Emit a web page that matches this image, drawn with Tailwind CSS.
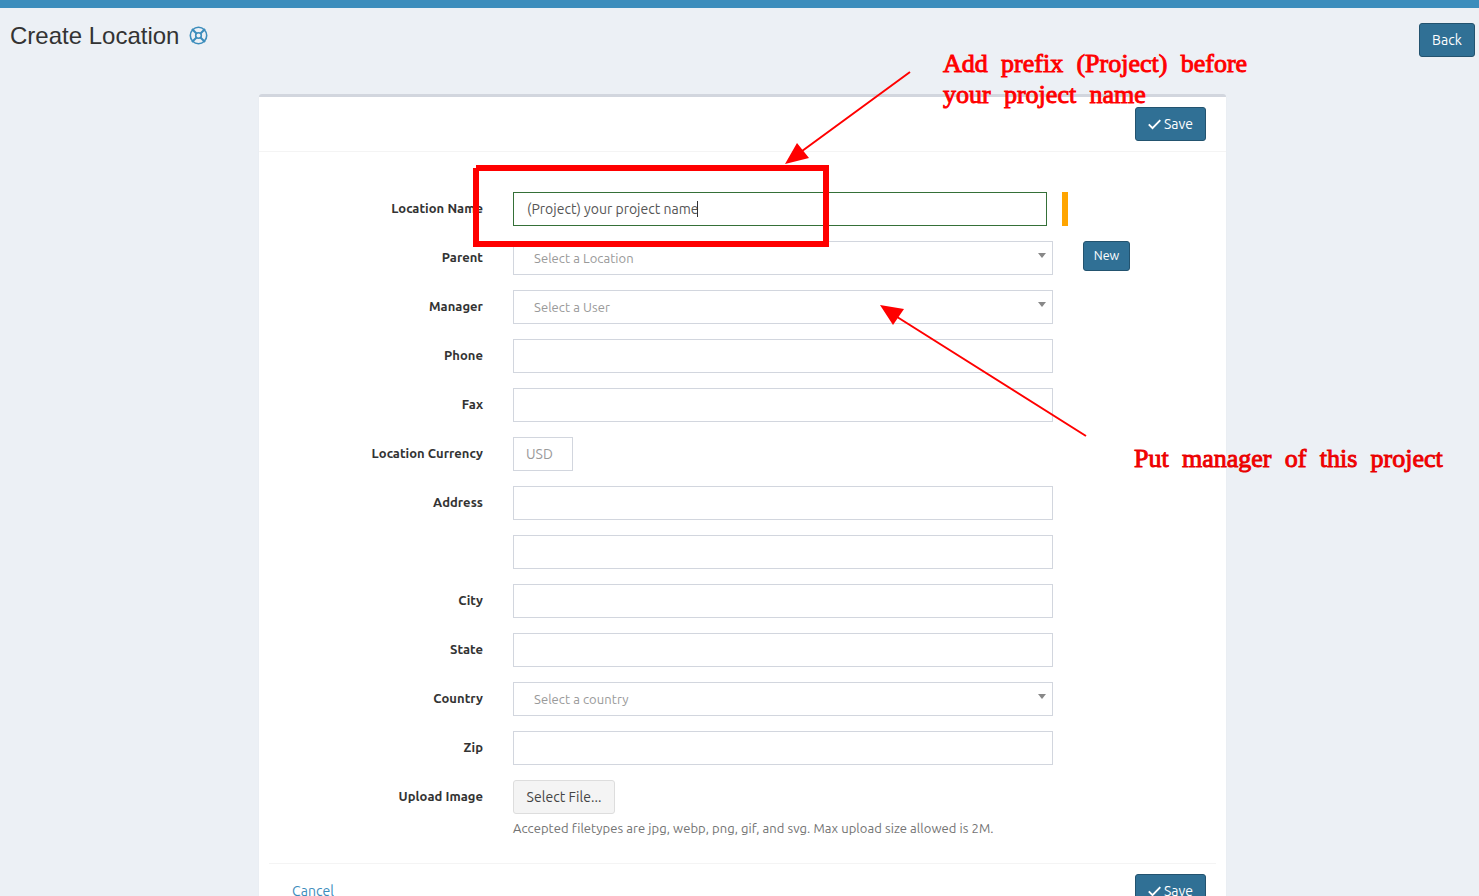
<!DOCTYPE html>
<html lang="en">
<head>
<meta charset="utf-8">
<title>Create Location</title>
<script src="https://cdn.jsdelivr.net/npm/@tailwindcss/browser@4"></script>
</head>
<body class="relative h-[896px] overflow-hidden bg-[#ecf0f5] font-['Ubuntu','Noto_Sans',sans-serif] text-sm text-[#333]">
<div class="h-2 bg-[#3c8dbc]"></div>
<header class="flex h-[86px] items-start justify-between pl-[10px] pr-1">
  <h1 class="mt-[10px] flex items-center font-['Liberation_Sans',sans-serif] text-2xl leading-9">Create Location
    <svg class="mb-0.5 ml-[10px] size-[19px]" viewBox="0 0 19 19" fill="none" stroke="#3c8dbc" stroke-width="1.6"><circle cx="9.5" cy="9.5" r="8.2"/><circle cx="9.5" cy="9.5" r="2.8"/><path d="M3 3l4.5 4.5M16 3l-4.5 4.5M3 16l4.5-4.5M16 16l-4.5-4.5" stroke-width="2.1"/></svg>
  </h1>
  <button class="mt-[15px] h-[34px] w-14 rounded-[3px] border border-[#23536f] bg-[#307095] text-white"><span class="tracking-[0.1px]">Back</span></button>
</header>
<main class="ml-[259px] h-[820px] w-[967px] rounded-t-[3px] border-t-[3px] border-[#d2d6de] bg-white shadow-[0_1px_1px_rgba(0,0,0,0.1)]">
  <div class="flex h-[55px] justify-end border-b border-[#f4f4f4] pr-5 pt-[10px]">
    <button class="flex h-[34px] w-[71px] items-center justify-center gap-[3px] rounded-[3px] border border-[#23536f] bg-[#307095] text-white"><svg class="size-[13px]" viewBox="0 0 13 13" fill="none" stroke="#fff" stroke-width="1.9"><path d="M.8 6.3l3.7 3.8L12.3 2.2"/></svg><span>Save</span></button>
  </div>
  <form class="flex flex-col gap-[15px] pt-10">
    <div class="flex h-[34px]"><label class="mr-[30px] w-[224px] pt-[6px] text-right text-[13px] leading-5 font-bold whitespace-nowrap tracking-[0.04px]">Location Name</label><div class="flex h-[34px] w-[534px] items-center border border-[#357038] pl-[13px] text-[#555]"><span>(Project) your project name</span><span class="-ml-px h-4 w-px bg-[#333]"></span></div><div class="ml-[15px] w-1.5 bg-[#ffa500]"></div></div>
    <div class="flex h-[34px]"><label class="mr-[30px] w-[224px] pt-[6px] text-right text-[13px] leading-5 font-bold tracking-[0.04px]">Parent</label><div class="flex w-[540px] justify-between border border-[#d2d6de] pl-5 pr-1.5 text-[13px] leading-[33px] text-[#999]"><span class="tracking-[0.07px]">Select a Location</span><svg class="mt-[11px] h-[5px] w-2" viewBox="0 0 8 5"><path d="M0 0h8L4 5z" fill="#888"/></svg></div><button type="button" class="ml-[30px] h-[30px] w-[47px] rounded-[3px] border border-[#23536f] bg-[#307095] text-[12.5px] text-white">New</button></div>
    <div class="flex h-[34px]"><label class="mr-[30px] w-[224px] pt-[6px] text-right text-[13px] leading-5 font-bold tracking-[0.04px]">Manager</label><div class="flex w-[540px] justify-between border border-[#d2d6de] pl-5 pr-1.5 text-[13px] leading-[33px] text-[#999]"><span class="tracking-[0.07px]">Select a User</span><svg class="mt-[11px] h-[5px] w-2" viewBox="0 0 8 5"><path d="M0 0h8L4 5z" fill="#888"/></svg></div></div>
    <div class="flex h-[34px]"><label class="mr-[30px] w-[224px] pt-[6px] text-right text-[13px] leading-5 font-bold tracking-[0.04px]">Phone</label><div class="w-[540px] border border-[#d2d6de]"></div></div>
    <div class="flex h-[34px]"><label class="mr-[30px] w-[224px] pt-[6px] text-right text-[13px] leading-5 font-bold tracking-[0.04px]">Fax</label><div class="w-[540px] border border-[#d2d6de]"></div></div>
    <div class="flex h-[34px]"><label class="mr-[30px] w-[224px] pt-[6px] text-right text-[13px] leading-5 font-bold tracking-[0.04px]">Location Currency</label><div class="w-[60px] border border-[#d2d6de] pl-3 leading-[33px] text-[#999]"><span>USD</span></div></div>
    <div class="flex h-[34px]"><label class="mr-[30px] w-[224px] pt-[6px] text-right text-[13px] leading-5 font-bold tracking-[0.04px]">Address</label><div class="w-[540px] border border-[#d2d6de]"></div></div>
    <div class="flex h-[34px] pl-[254px]"><div class="w-[540px] border border-[#d2d6de]"></div></div>
    <div class="flex h-[34px]"><label class="mr-[30px] w-[224px] pt-[6px] text-right text-[13px] leading-5 font-bold tracking-[0.04px]">City</label><div class="w-[540px] border border-[#d2d6de]"></div></div>
    <div class="flex h-[34px]"><label class="mr-[30px] w-[224px] pt-[6px] text-right text-[13px] leading-5 font-bold tracking-[0.04px]">State</label><div class="w-[540px] border border-[#d2d6de]"></div></div>
    <div class="flex h-[34px]"><label class="mr-[30px] w-[224px] pt-[6px] text-right text-[13px] leading-5 font-bold tracking-[0.04px]">Country</label><div class="flex w-[540px] justify-between border border-[#d2d6de] pl-5 pr-1.5 text-[13px] leading-[33px] text-[#999]"><span class="tracking-[0.07px]">Select a country</span><svg class="mt-[11px] h-[5px] w-2" viewBox="0 0 8 5"><path d="M0 0h8L4 5z" fill="#888"/></svg></div></div>
    <div class="flex h-[34px]"><label class="mr-[30px] w-[224px] pt-[6px] text-right text-[13px] leading-5 font-bold tracking-[0.04px]">Zip</label><div class="w-[540px] border border-[#d2d6de]"></div></div>
    <div class="flex h-[68px]"><label class="mr-[30px] w-[224px] pt-[6px] text-right text-[13px] leading-5 font-bold tracking-[0.04px]">Upload Image</label><div><button type="button" class="h-[34px] w-[102px] rounded-[3px] border border-[#ddd] bg-[#f4f4f4] text-[#444]"><span class="tracking-[0.05px]">Select File...</span></button><p class="mt-1 text-[13px] leading-5 whitespace-nowrap text-[#737373]"><span class="tracking-[0.065px]">Accepted filetypes are jpg, webp, png, gif, and svg. Max upload size allowed is 2M.</span></p></div></div>
  </form>
  <footer class="mx-[10px] mt-[15px] flex justify-between border-t border-[#f4f4f4] pt-[10px] pl-[23px] pr-[10px]">
    <a class="pt-[7px] leading-5 text-[#3c8dbc]"><span class="tracking-[0.05px]">Cancel</span></a>
    <button class="flex h-[34px] w-[71px] items-center justify-center gap-[3px] rounded-[3px] border border-[#23536f] bg-[#307095] text-white"><svg class="size-[13px]" viewBox="0 0 13 13" fill="none" stroke="#fff" stroke-width="1.9"><path d="M.8 6.3l3.7 3.8L12.3 2.2"/></svg><span>Save</span></button>
  </footer>
</main>
<!-- Annotations drawn over the form -->
<svg class="absolute inset-0 h-[896px] w-[1479px]" viewBox="0 0 1479 896" fill="none" stroke="#f00">
  <path d="M476 165H829V247H473V168H476zM479 171V241H823V171z" fill="#f00" fill-rule="evenodd" stroke="none"/>
  <path d="M910 72L798 154M1086 436L894 315" stroke-width="2"/>
  <path d="M785 164L797 143L809 158zM880 305L904 309L893 325z" fill="#f00" stroke="none"/>
</svg>
<p class="absolute top-[48px] left-[943px] font-['Liberation_Serif',serif] text-[26px] leading-[31px] whitespace-nowrap text-[#f00] [word-spacing:6.8px] [-webkit-text-stroke:0.9px_#f00]"><span>Add prefix (Project) before</span><br><span>your project name</span></p>
<p class="absolute top-[443px] left-[1134px] font-['Liberation_Serif',serif] text-[26px] leading-[31px] whitespace-nowrap text-[#f00] [word-spacing:6.8px] [-webkit-text-stroke:0.9px_#e60000]"><span>Put manager of this project</span></p>
</body>
</html>
